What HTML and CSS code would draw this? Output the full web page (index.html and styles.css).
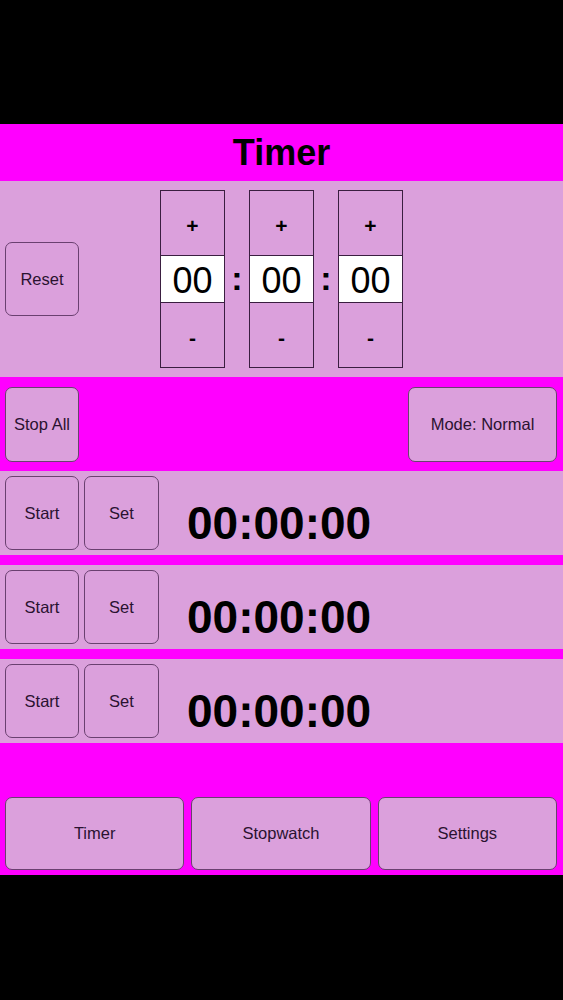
FILE: index.html
```html
<!DOCTYPE html>
<html>
<head>
<meta charset="utf-8">
<link rel="stylesheet" href="styles.css">
</head>
<body>
<div class="screen">
  <div class="app">
    <header class="header"><h1 class="title">Timer</h1></header>

    <section class="setter">
      <button class="btn reset">Reset</button>
      <div class="spinners">
        <div class="spin">
          <div class="spin-btn plus">+</div>
          <div class="spin-val">00</div>
          <div class="spin-btn minus">-</div>
        </div>
        <div class="colon">:</div>
        <div class="spin">
          <div class="spin-btn plus">+</div>
          <div class="spin-val">00</div>
          <div class="spin-btn minus">-</div>
        </div>
        <div class="colon">:</div>
        <div class="spin">
          <div class="spin-btn plus">+</div>
          <div class="spin-val">00</div>
          <div class="spin-btn minus">-</div>
        </div>
      </div>
    </section>

    <section class="controls">
      <button class="btn stop">Stop All</button>
      <button class="btn mode">Mode: Normal</button>
    </section>

    <section class="timers">
      <div class="timer-row">
        <button class="btn small">Start</button>
        <button class="btn small">Set</button>
        <div class="time">00:00:00</div>
      </div>
      <div class="timer-row">
        <button class="btn small">Start</button>
        <button class="btn small">Set</button>
        <div class="time">00:00:00</div>
      </div>
      <div class="timer-row">
        <button class="btn small">Start</button>
        <button class="btn small">Set</button>
        <div class="time">00:00:00</div>
      </div>
    </section>

    <nav class="nav">
      <button class="btn tab">Timer</button>
      <button class="btn tab">Stopwatch</button>
      <button class="btn tab">Settings</button>
    </nav>
  </div>
</div>
</body>
</html>
```

FILE: styles.css
```css
* { box-sizing: border-box; }

html, body {
  margin: 0;
  padding: 0;
  background: #000;
}

body {
  font-family: "Liberation Sans", Arial, sans-serif;
  color: #000;
}

.screen {
  width: 563px;
  height: 1000px;
  padding-top: 124px;
  background: #000;
}

.app {
  background: #ff00ff;
  display: flex;
  flex-direction: column;
}

.header {
  height: 57px;
  background: #ff00ff;
  display: flex;
  justify-content: center;
}

.title {
  margin: 0;
  font-size: 36px;
  font-weight: bold;
  line-height: 57px;
  color: #000;
}

.btn {
  font-family: "Liberation Sans", Arial, sans-serif;
  font-size: 16.5px;
  color: #2a1230;
  background: #dba0dc;
  border: 1px solid #6a4070;
  border-radius: 7px;
  padding: 0;
  margin: 0;
  display: flex;
  align-items: center;
  justify-content: center;
}

.setter {
  height: 196px;
  background: #dba0dc;
  display: flex;
  align-items: center;
  padding-left: 5px;
}

.reset {
  width: 74px;
  height: 74px;
  margin-right: 81px;
}

.spinners {
  display: flex;
  align-items: stretch;
  height: 178px;
}

.spin {
  width: 65px;
  display: flex;
  flex-direction: column;
  border: 1px solid #3a1e40;
}

.spin-btn {
  display: flex;
  align-items: center;
  justify-content: center;
  font-size: 21px;
  font-weight: bold;
  color: #000;
  padding-top: 6px;
}

.plus {
  height: 65px;
  border-bottom: 1px solid #3a1e40;
}

.minus {
  flex: 1;
  border-top: 1px solid #3a1e40;
}

.spin-val {
  height: 46px;
  background: #fff;
  font-size: 36px;
  line-height: 46px;
  padding-top: 2px;
  text-align: center;
  color: #000;
}

.colon {
  width: 24px;
  display: flex;
  align-items: center;
  justify-content: center;
  font-size: 34px;
  font-weight: bold;
  padding-bottom: 2px;
}

.controls {
  height: 94px;
  background: #ff00ff;
  display: flex;
  align-items: center;
  justify-content: space-between;
  padding: 0 6px 0 5px;
}

.stop {
  width: 74px;
  height: 75px;
}

.mode {
  width: 149px;
  height: 75px;
}

.timers {
  display: flex;
  flex-direction: column;
  gap: 10px;
}

.timer-row {
  height: 84px;
  background: #dba0dc;
  display: flex;
  align-items: flex-start;
  gap: 5px;
  padding: 5px 0 0 5px;
}

.small {
  width: 75px;
  height: 74px;
}

.small:first-child {
  width: 74px;
}

.time {
  margin-left: 23px;
  margin-top: 24px;
  font-size: 46px;
  line-height: 46px;
  font-weight: bold;
  color: #000;
}

.nav {
  display: flex;
  gap: 7px;
  padding: 54px 6px 5px 5px;
  background: #ff00ff;
}

.tab {
  flex: 1;
  height: 73px;
}
```
